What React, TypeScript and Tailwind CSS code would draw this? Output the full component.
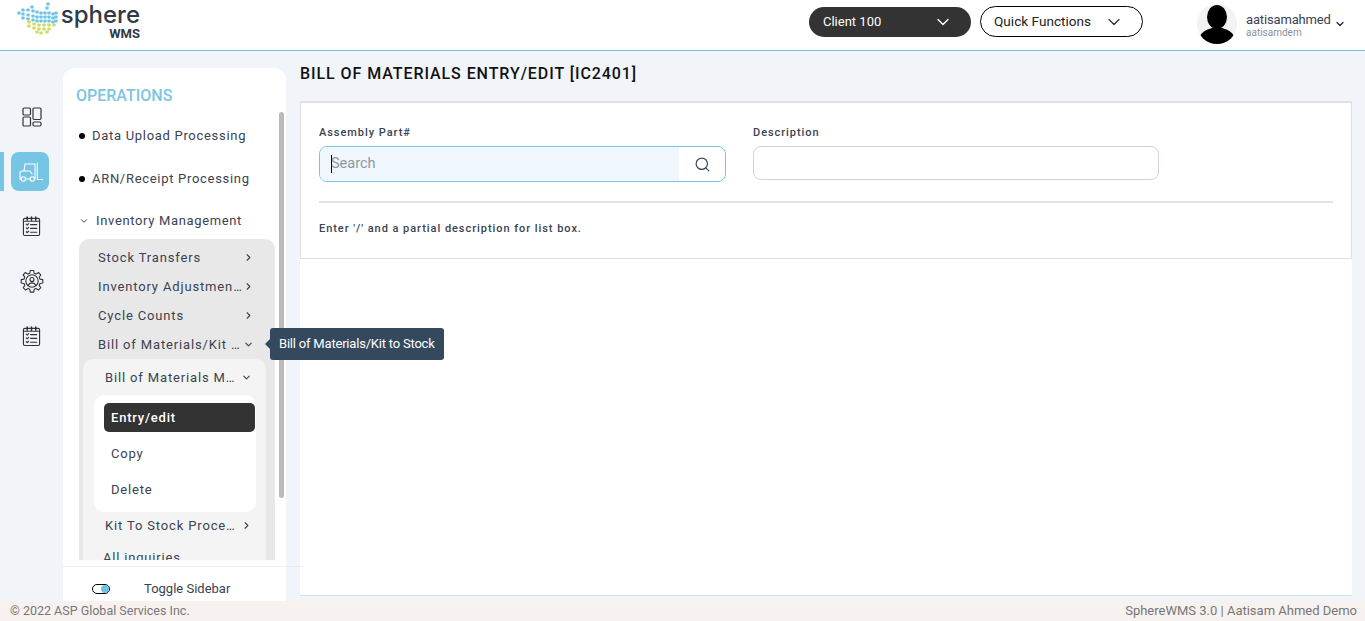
import React from 'react';
import { ChevronDown, ChevronRight, Search } from 'lucide-react';

const LOGO_DOTS: [number, number, string][] = [
  [44, 3, '#6ec3e6'], [43, 7, '#6ec3e6'], [28, 6, '#6ec3e6'], [24, 9, '#6ec3e6'], [29, 10, '#6ec3e6'],
  [19, 9, '#6ec3e6'], [33, 11, '#6ec3e6'], [37, 12, '#6ec3e6'], [41, 12, '#6ec3e6'], [45, 12, '#6ec3e6'],
  [15, 12, '#6ec3e6'], [19, 13, '#6ec3e6'], [24, 14, '#6ec3e6'], [29, 15, '#6ec3e6'], [33, 16, '#6ec3e6'],
  [37, 16, '#6ec3e6'], [41, 16, '#6ec3e6'], [45, 16, '#6ec3e6'], [49, 13, '#6ec3e6'], [52, 12, '#6ec3e6'],
  [19, 17, '#6ec3e6'], [24, 18, '#6ec3e6'], [29, 19, '#6ec3e6'], [33, 20, '#6ec3e6'], [37, 20, '#6ec3e6'],
  [41, 20, '#6ec3e6'], [45, 20, '#6ec3e6'], [49, 17, '#6ec3e6'], [52, 16, '#6ec3e6'], [49, 21, '#6ec3e6'],
  [52, 20, '#6ec3e6'], [25, 21, '#cddc5a'], [30, 23, '#cddc5a'], [35, 24, '#cddc5a'], [40, 24, '#cddc5a'],
  [45, 24, '#cddc5a'], [50, 24, '#cddc5a'], [25, 25, '#cddc5a'], [30, 27, '#cddc5a'], [35, 28, '#cddc5a'],
  [40, 28, '#cddc5a'], [45, 28, '#cddc5a'], [33, 31, '#cddc5a'], [37, 32, '#cddc5a'], [43, 31, '#cddc5a'],
];

const SphereLogo = () => (
  <svg viewBox="0 0 60 36" className="h-9 w-[60px] shrink-0">
    {LOGO_DOTS.map(([x, y, fill]) => (
      <rect key={`${x}-${y}`} x={x - 1.6} y={y - 1.6} width="3.2" height="3.2" rx="0.9" fill={fill} />
    ))}
  </svg>
);

const DashboardIcon = () => (
  <svg viewBox="0 0 20 20" fill="none" stroke="#333" strokeWidth="1.2" className="h-5 w-5">
    <rect x="1" y="1" width="7.5" height="7" rx="1.2" />
    <rect x="1" y="10" width="7.5" height="9" rx="1.2" />
    <rect x="11" y="1" width="8" height="11.5" rx="1.2" />
    <rect x="11" y="15" width="8" height="4" rx="1.2" />
  </svg>
);

const ForkliftIcon = () => (
  <svg viewBox="0 0 26 24" fill="none" stroke="#fff" strokeWidth="1.1" strokeLinecap="round" strokeLinejoin="round" className="h-6 w-[26px]">
    <path d="M4 19H3v-6c0-1.300.7-2 2-2h2l1-7h10v15h-.5" />
    <path d="M8.500 19h4.500" />
    <path d="M7 11h6l2 3" />
    <circle cx="6.300" cy="19" r="2.200" />
    <circle cx="15.300" cy="19" r="2.200" />
    <path d="M20.300 3v16.500H26" />
  </svg>
);

const ChecklistIcon = () => (
  <svg viewBox="0 0 20 22" fill="none" stroke="#333" strokeWidth="1.200" strokeLinecap="round" strokeLinejoin="round" className="h-[21px] w-[19px]">
    <rect x="1.500" y="2.500" width="17" height="18" rx="1.500" />
    <path d="M1.500 5.500h17" />
    <path d="M5.500 1v3.500M10 1v3.500M14.500 1v3.500" strokeWidth="1.600" />
    <path d="m4.500 8.500 1 1 1.500-1.500M9 9h6.500M4.500 12.500l1 1 1.500-1.500M9 13h6.500M4.500 16.500l1 1 1.500-1.500M9 17h6.500" />
  </svg>
);

const GearUserIcon = () => (
  <svg viewBox="0 0 24 24" fill="none" stroke="#333" strokeWidth="1.100" strokeLinecap="round" strokeLinejoin="round" className="h-6 w-6">
    <path d="M10.300 1.500h3.400l.5 2.800 1.900.8 2.300-1.600 2.400 2.400-1.600 2.300.8 1.900 2.800.5v3.400l-2.800.5-.8 1.900 1.600 2.300-2.400 2.400-2.300-1.600-1.900.8-.5 2.800h-3.400l-.5-2.800-1.900-.8-2.300 1.600-2.400-2.400 1.600-2.300-.8-1.900-2.800-.5v-3.400l2.800-.5.8-1.900L3.100 5.900l2.400-2.400 2.300 1.600 1.900-.8z" />
    <circle cx="12" cy="12" r="6.200" />
    <circle cx="12" cy="10.500" r="2" />
    <path d="M8.300 16.500c.6-1.800 2-2.600 3.700-2.600s3.100.8 3.700 2.600" />
  </svg>
);

const Avatar = () => (
  <svg viewBox="0 0 40 40" className="h-10 w-10 shrink-0 rounded-full bg-[#f3f3f3]">
    <ellipse cx="20" cy="13" rx="10" ry="12" fill="#000" />
    <path d="M2 36c1-8 7-10 13-12h10c6 2 12 4 13 12-4 4-11 5-18 5s-14-1-18-5z" fill="#000" />
  </svg>
);

const Bullet = ({ label }: { label: string }) => (
  <div className="flex items-center pl-4 text-[13px] leading-5 tracking-[0.7px] text-[#3b4252]">
    <span className="mr-[7px] h-[6px] w-[6px] rounded-full bg-black" />
    {label}
  </div>
);

const SubRow = ({ label, open, className }: { label: string; open?: boolean; className: string }) => (
  <div className={`flex h-[29px] items-center text-[13px] tracking-[0.85px] text-[#3b4252] ${className}`}>
    <span className="min-w-0 flex-1 truncate">{label}</span>
    {open ? <ChevronDown size={11} strokeWidth={2.4} /> : <ChevronRight size={11} strokeWidth={2.4} />}
  </div>
);

const Sidebar = () => (
  <aside className="relative mt-[17px] flex w-[223px] shrink-0 flex-col rounded-t-xl bg-white">
    <div className="pl-[13px] pt-[17px] text-base font-medium leading-[22px] text-[#7cc5e3]">OPERATIONS</div>
    <div className="relative mt-[5px] h-[454px] overflow-hidden">
      <div className="pt-[14px]">
        <Bullet label="Data Upload Processing" />
        <div className="mt-[23px]">
          <Bullet label="ARN/Receipt Processing" />
        </div>
        <div className="mt-[22px] flex items-center pl-4 text-[13px] leading-5 tracking-[0.65px] text-[#3b4252]">
          <ChevronDown size={10} strokeWidth={2.4} className="mr-[7px]" />
          Inventory Management
        </div>
        <div className="ml-4 mr-[11px] mt-[8px] h-[321px] overflow-hidden rounded-t-[10px] bg-[#e8e8e8] pt-[4px]">
          <SubRow label="Stock Transfers" className="pl-[19px] pr-[21px]" />
          <SubRow label="Inventory Adjustments" className="pl-[19px] pr-[21px]" />
          <SubRow label="Cycle Counts" className="pl-[19px] pr-[21px]" />
          <SubRow label="Bill of Materials/Kit to Stock" open className="pl-[19px] pr-[21px]" />
          <div className="ml-1 mr-[9px] h-[220px] rounded-t-[10px] bg-[#f4f4f4] pt-1">
            <SubRow label="Bill of Materials Maintenance" open className="pl-[22px] pr-[14px]" />
            <div className="ml-[11px] mr-[10px] mt-[3px] rounded-[10px] bg-white pb-2 pl-[10px] pr-px pt-2">
              <div className="flex h-[29px] items-center rounded-[5px] bg-[#333] pl-[7px] text-[13px] font-medium tracking-[0.8px] text-white">Entry/edit</div>
              <div className="flex h-9 items-center pl-[7px] pt-[7px] text-[13px] tracking-[0.8px] text-[#3b4252]">Copy</div>
              <div className="flex h-9 items-center pl-[7px] pt-[7px] text-[13px] tracking-[0.8px] text-[#3b4252]">Delete</div>
            </div>
            <div className="-mt-px">
              <SubRow label="Kit To Stock Processing" className="pl-[22px] pr-[14px]" />
            </div>
            <div className="pl-5 pt-2 text-[13px] leading-5 tracking-[0.8px] text-[#3b4252]">All inquiries</div>
          </div>
        </div>
      </div>
      <div className="absolute bottom-[68px] right-[2px] top-0 w-[5px] rounded-[3px] bg-[#bbb]" />
    </div>
    <div className="relative flex flex-1 items-center border-t border-[#ececec] pl-[29px] pt-[10px] text-[13px] text-[#3b4252]">
      <span className="flex h-[10px] w-[18px] items-center justify-end rounded-full border border-black">
        <span className="h-2 w-2 rounded-full bg-[#6ec3e6]" />
      </span>
      <span className="ml-[34px]">Toggle Sidebar</span>
      <span className="absolute -right-[17px] -top-px h-px w-[17px] bg-[#ececec]" />
    </div>
    <div className="absolute left-[207px] top-[260px] flex h-8 w-[174px] items-center rounded-[3px] bg-[#34495e] pl-[9px] text-[13px] tracking-[-0.2px] text-white">
      <span className="absolute -left-[5px] top-[11px] h-0 w-0 border-y-[5px] border-r-[5px] border-y-transparent border-r-[#34495e]" />
      Bill of Materials/Kit to Stock
    </div>
  </aside>
);

export default function App() {
  return (
    <div className="flex h-[621px] w-[1365px] flex-col overflow-hidden bg-[#f1f5fa] font-['Roboto',sans-serif]">
      <header className="flex h-[51px] shrink-0 items-start border-b border-[#6ec3e3] bg-white">
        <div className="flex w-[150px] pl-[4px] pt-[1px]">
          <SphereLogo />
          <div className="-ml-[2px] flex w-[78px] flex-col items-end pt-[3px] text-[#2f3a46]">
            <span className="font-['Inter',sans-serif] text-2xl font-medium leading-[22px]">sphere</span>
            <span className="mt-[2px] text-[13px] font-bold leading-[12px]">WMS</span>
          </div>
        </div>
        <div className="ml-[659px] mt-[7px] flex h-[30px] w-[162px] items-center justify-between rounded-full bg-[#333] pl-[14px] pr-[18px] text-[13px] text-white">
          Client 100
          <ChevronDown size={20} strokeWidth={1.6} />
        </div>
        <div className="ml-[9px] mt-[6px] flex h-[31px] w-[163px] items-center rounded-full border border-black pl-[13px] text-[13.6px] text-[#222]">
          Quick Functions
          <ChevronDown size={20} strokeWidth={1.6} className="ml-[13px] text-[#333]" />
        </div>
        <div className="ml-[54px] mt-1">
          <Avatar />
        </div>
        <div className="ml-[9px] mt-[12px] flex flex-col">
          <span className="text-[13px] leading-[15px] tracking-[-0.15px] text-[#3b4252]">aatisamahmed</span>
          <span className="text-[10px] leading-[12px] text-[#8a929c]">aatisamdem</span>
        </div>
        <ChevronDown size={12} strokeWidth={2.4} className="ml-[3px] mt-[18px] text-[#222]" />
      </header>

      <div className="flex min-h-0 flex-1">
        <nav className="flex w-[63px] shrink-0 flex-col items-center pt-[56px]">
          <DashboardIcon />
          <div className="relative mb-[25px] ml-[-3px] mt-[25px] flex h-[39px] w-[38px] items-center justify-center rounded-lg bg-[#76c5e5]">
            <span className="absolute -left-[11px] top-0 h-[39px] w-1 bg-[#76c5e5]" />
            <ForkliftIcon />
          </div>
          <ChecklistIcon />
          <div className="mt-[32px]">
            <GearUserIcon />
          </div>
          <div className="mt-[33px]">
            <ChecklistIcon />
          </div>
        </nav>

        <Sidebar />

        <main className="ml-[14px] flex w-[1052px] shrink-0 flex-col pb-[5px]">
          <h1 className="mt-[13px] text-base font-medium leading-[20px] tracking-[0.93px] text-[#111]">BILL OF MATERIALS ENTRY/EDIT [IC2401]</h1>
          <div className="mt-[17px] flex min-h-0 flex-1 flex-col border-b border-[#d9dfe6] bg-white">
            <section className="h-[158px] border border-t-2 border-[#e0e0e0] px-[18px] pt-[23px]">
              <div className="flex gap-[27px]">
                <div className="w-[407px]">
                  <label className="block text-[11px] font-medium leading-[14px] tracking-[0.95px] text-[#3b4252]">Assembly Part#</label>
                  <div className="mt-[6px] flex h-9 items-center overflow-hidden rounded-lg border border-[#76c5e5]">
                    <div className="flex h-full w-[359px] items-center bg-[#f0f7fe] pl-[11px] text-[14.5px] text-[#8e96a3]">
                      <span className="mr-[-1px] h-[18px] w-px bg-black" />
                      Search
                    </div>
                    <div className="flex flex-1 justify-center text-[#34495e]">
                      <Search size={17} strokeWidth={1.7} />
                    </div>
                  </div>
                </div>
                <div className="w-[406px]">
                  <label className="block text-[11px] font-medium leading-[14px] tracking-[0.95px] text-[#3b4252]">Description</label>
                  <div className="mt-[6px] h-[34px] rounded-lg border border-[#ced4da] bg-white" />
                </div>
              </div>
              <div className="mt-[19px] border-t-2 border-[#e4e4e4] pt-[19px] text-[11px] font-medium leading-[14px] tracking-[0.95px] text-[#3b4252]">
                Enter '/' and a partial description for list box.
              </div>
            </section>
          </div>
        </main>
      </div>

      <footer className="flex h-5 shrink-0 items-center justify-between bg-[#f7f2f0] pl-[10px] pr-2 text-[#777]">
        <span className="text-[12.5px]">© 2022 ASP Global Services Inc.</span>
        <span className="text-[13px]">SphereWMS 3.0 | Aatisam Ahmed Demo</span>
      </footer>
    </div>
  );
}
